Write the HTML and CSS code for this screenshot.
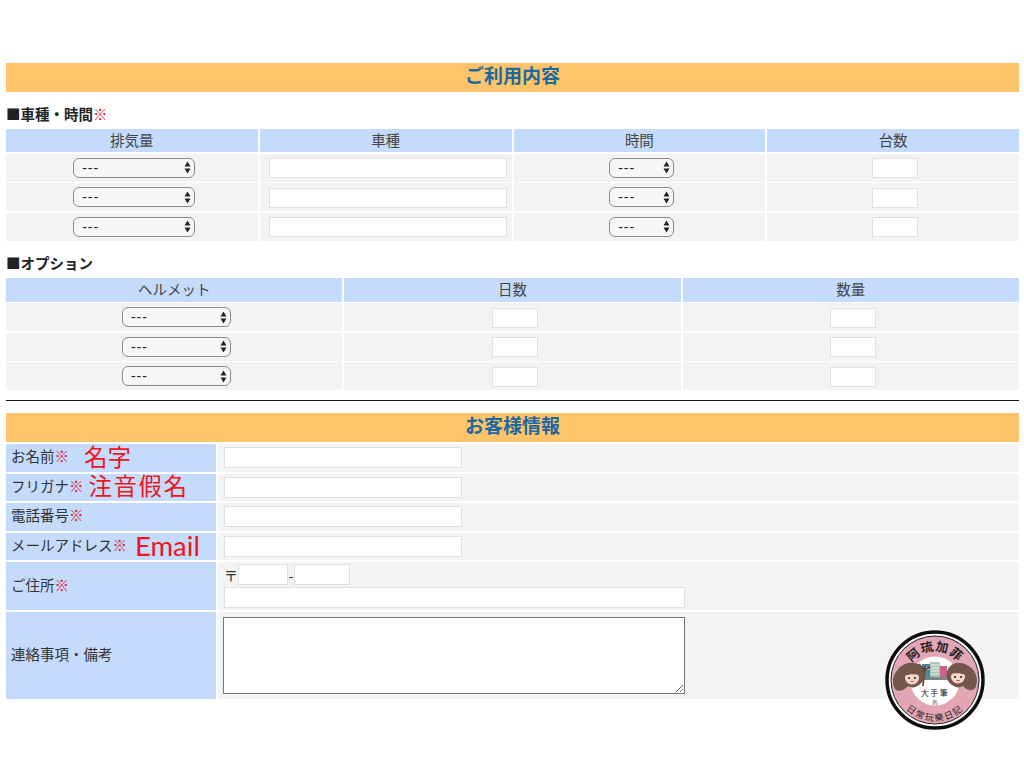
FILE: index.html
```html
<!DOCTYPE html>
<html lang="ja">
<head>
    <meta charset="UTF-8">
    <title>ご利用内容</title>
    <link rel="stylesheet" href="styles.css">
</head>
<body>
    <div class="page">
        <h2 class="bar">ご利用内容</h2>

        <h3 class="sub sub-first">■車種・時間<span class="req">※</span></h3>
        <div class="grid grid-4">
            <div class="th">排気量</div><div class="th">車種</div><div class="th">時間</div><div class="th">台数</div>

            <div class="td"><select class="sel sel-cc"><option>---</option></select></div>
            <div class="td"><input class="inp inp-car" type="text"></div>
            <div class="td"><select class="sel sel-time"><option>---</option></select></div>
            <div class="td"><input class="inp inp-num" type="text"></div>

            <div class="td"><select class="sel sel-cc"><option>---</option></select></div>
            <div class="td"><input class="inp inp-car" type="text"></div>
            <div class="td"><select class="sel sel-time"><option>---</option></select></div>
            <div class="td"><input class="inp inp-num" type="text"></div>

            <div class="td"><select class="sel sel-cc"><option>---</option></select></div>
            <div class="td"><input class="inp inp-car" type="text"></div>
            <div class="td"><select class="sel sel-time"><option>---</option></select></div>
            <div class="td"><input class="inp inp-num" type="text"></div>
        </div>

        <h3 class="sub sub-option">■オプション</h3>
        <div class="grid grid-3">
            <div class="th">ヘルメット</div><div class="th">日数</div><div class="th">数量</div>

            <div class="td"><select class="sel sel-helmet"><option>---</option></select></div>
            <div class="td"><input class="inp inp-num" type="text"></div>
            <div class="td"><input class="inp inp-num" type="text"></div>

            <div class="td"><select class="sel sel-helmet"><option>---</option></select></div>
            <div class="td"><input class="inp inp-num" type="text"></div>
            <div class="td"><input class="inp inp-num" type="text"></div>

            <div class="td"><select class="sel sel-helmet"><option>---</option></select></div>
            <div class="td"><input class="inp inp-num" type="text"></div>
            <div class="td"><input class="inp inp-num" type="text"></div>
        </div>

        <hr class="rule">

        <h2 class="bar">お客様情報</h2>
        <div class="info">
            <div class="lbl h-a">お名前<span class="req">※</span><span class="note note-name">名字</span></div>
            <div class="val h-a"><input class="inp inp-wide" type="text"></div>

            <div class="lbl h-a">フリガナ<span class="req">※</span><span class="note note-kana">注音假名</span></div>
            <div class="val h-a"><input class="inp inp-wide" type="text"></div>

            <div class="lbl h-a">電話番号<span class="req">※</span></div>
            <div class="val h-a"><input class="inp inp-wide" type="text"></div>

            <div class="lbl h-a">メールアドレス<span class="req">※</span><span class="note note-mail">Email</span></div>
            <div class="val h-a"><input class="inp inp-wide" type="text"></div>

            <div class="lbl h-b">ご住所<span class="req">※</span></div>
            <div class="val val-stack h-b">
                <div class="zip">〒<input class="inp inp-zip1" type="text"><span class="dash">-</span><input class="inp inp-zip2" type="text"></div>
                <input class="inp inp-addr" type="text">
            </div>

            <div class="lbl h-c">連絡事項・備考</div>
            <div class="val h-c"><textarea class="memo"></textarea></div>
        </div>
    </div>

    <!-- blog stamp over the corner of the form -->
    <svg class="stamp" width="102" height="102" viewBox="0 0 102 102">
        <circle cx="51" cy="51" r="50.500" fill="#fff"/>
        <circle cx="51" cy="51" r="48" fill="none" stroke="#0c0c0c" stroke-width="3.500"/>
        <circle cx="51" cy="51" r="44" fill="#e3a6b5" stroke="#222" stroke-width="1"/>
        <circle cx="51" cy="52" r="24.500" fill="#fff"/>

        <!-- street between the two heads -->
        <rect x="38" y="35" width="9" height="13" fill="#4a86a8"/>
        <rect x="40" y="38" width="5" height="3" fill="#bcd6e2"/>
        <rect x="46" y="33" width="10" height="16" fill="#a8c6b8"/>
        <path d="M47 36h8M47 39h8M47 42h8M47 45h8" stroke="#eef5f0" stroke-width="1"/>
        <rect x="56" y="37" width="7" height="12" fill="#c9628a"/>
        <rect x="40" y="48" width="24" height="3" fill="#7b858c"/>
        <path d="M41 37l-2 20M35 35l5 6M46 38l-6 3" stroke="#5a3a22" stroke-width="1.600" fill="none"/>

        <!-- left girl -->
        <path d="M10 58c-3-8 1-17 9-22 7-4 16-3 20 4 3 6 1 13-4 16-4 3-8 3-11 1-3 4-12 8-14 1z" fill="#75564a"/>
        <ellipse cx="28" cy="49" rx="7" ry="6.500" fill="#f7d9cc"/>
        <path d="M20 47c3-6 12-7 16-1-5-1-11-1-16 1z" fill="#75564a"/>
        <circle cx="25" cy="49" r="1.100" fill="#222"/><circle cx="31" cy="49" r="1.100" fill="#222"/>
        <path d="M26.500 52.500h3" stroke="#c4413f" stroke-width="1"/>

        <!-- right girl -->
        <path d="M92 57c3-8-1-17-9-21-7-4-15-3-19 4-3 6-1 13 4 16 4 3 8 3 11 1 3 4 11 7 13 0z" fill="#75564a"/>
        <ellipse cx="74" cy="48" rx="7" ry="6.500" fill="#f7d9cc"/>
        <path d="M82 46c-3-6-12-7-16-1 5-1 11-1 16 1z" fill="#75564a"/>
        <circle cx="71" cy="48" r="1.100" fill="#222"/><circle cx="77" cy="48" r="1.100" fill="#222"/>
        <path d="M72.500 51.500h3" stroke="#c4413f" stroke-width="1"/>

        <path id="stampTop" d="M22 51a29 29 0 0 1 58 0" fill="none"/>
        <path id="stampBottom" d="M15.500 71.500a41 41 0 0 0 71 0" fill="none"/>
        <text class="stamp-top"><textPath href="#stampTop" startOffset="50%" text-anchor="middle">阿琉加菲</textPath></text>
        <text class="stamp-bottom"><textPath href="#stampBottom" startOffset="50%" text-anchor="middle">日常玩樂日記</textPath></text>
        <text class="stamp-mid" x="51" y="67" text-anchor="middle">大手筆</text>
        <text class="stamp-small" x="51" y="75" text-anchor="middle">的</text>
    </svg>
</body>
</html>
```

FILE: styles.css
```css
* {
    box-sizing: border-box;
}

html, body {
    margin: 0;
    padding: 0;
    background: #fff;
}

body {
    font-family: "Noto Sans CJK JP", "Liberation Sans", sans-serif;
    color: #333;
    height: 768px;
    overflow: hidden;
    position: relative;
}

.page {
    padding: 63px 5px 0 6px;
}

.bar {
    margin: 0;
    height: 29px;
    line-height: 24px;
    background: #fdc469;
    color: #1c68a0;
    font-size: 19px;
    font-weight: bold;
    text-align: center;
}

.sub {
    margin: 0;
    height: 17px;
    line-height: 13px;
    font-size: 14.500px;
    font-weight: bold;
    color: #222;
}

.sub-first {
    margin-top: 15px;
    margin-bottom: 5px;
}

.sub-option {
    margin-top: 15px;
    margin-bottom: 5px;
}

.req {
    color: #d9202a;
    font-weight: normal;
}

.grid {
    display: grid;
    column-gap: 2px;
    row-gap: 1.500px;
    grid-auto-rows: 28px;
}

.grid-4 {
    grid-template-columns: repeat(4, 1fr);
    grid-template-rows: 23px;
}

.grid-3 {
    grid-template-columns: repeat(3, 1fr);
    grid-template-rows: 24px;
}

.th {
    background: #c4dbfc;
    text-align: center;
    font-size: 14.500px;
    line-height: 22px;
    color: #444;
}

.td {
    background: #f3f3f3;
    display: flex;
    align-items: center;
    justify-content: center;
    padding-left: 4.500px;
}

.td .inp {
    height: 20px;
    margin-top: 1px;
}

.sel {
    appearance: none;
    -webkit-appearance: none;
    height: 20px;
    border: 1px solid #8a8a8a;
    border-radius: 6px;
    padding: 0 0 0 8px;
    font-family: "Liberation Sans", sans-serif;
    font-size: 14px;
    letter-spacing: 1px;
    color: #222;
    background: #f7f7f7 url("data:image/svg+xml,%3Csvg xmlns='http://www.w3.org/2000/svg' width='7' height='13'%3E%3Cpath d='M3.500 0.500L6.500 5.500H0.500zM3.500 12.500L0.500 7.500H6.500z' fill='%23222'/%3E%3C/svg%3E") no-repeat right 3px center;
}

.sel-cc {
    width: 122px;
}

.sel-time {
    width: 65px;
}

.sel-helmet {
    width: 109px;
}

.inp {
    display: block;
    height: 21px;
    border: 1px solid #e0e0e0;
    background: #fff;
    padding: 0;
    margin: 0;
}

.inp-car {
    width: 238px;
}

.inp-num {
    width: 46px;
}

.inp-wide {
    width: 238px;
}

.inp-zip1 {
    width: 50px;
}

.inp-zip2 {
    width: 56px;
}

.inp-addr {
    width: 461px;
}

.rule {
    margin: 10px 0 12px;
    border: 0;
    height: 1px;
    background: #111;
}

.info {
    display: grid;
    grid-template-columns: 210px 1fr;
    gap: 2px;
    margin-top: 2px;
}

.h-a {
    height: 27.500px;
}

.h-b {
    height: 48px;
}

.h-c {
    height: 87px;
}

.lbl {
    background: #c4dbfc;
    display: flex;
    align-items: center;
    padding: 0 0 4px 5px;
    font-size: 14.500px;
    color: #333;
    white-space: nowrap;
}

.val {
    background: #f3f3f3;
    display: flex;
    align-items: center;
    padding-left: 6px;
}

.val-stack {
    flex-direction: column;
    align-items: flex-start;
    justify-content: center;
    gap: 2px;
}

.zip {
    display: flex;
    align-items: center;
    font-size: 14px;
    height: 21px;
}

.dash {
    width: 6px;
    text-align: center;
}

.memo {
    display: block;
    width: 462px;
    height: 77px;
    margin: 0 0 0 -1px;
    border: 1px solid #767676;
    background: #fff;
    padding: 2px;
}

.note {
    color: #f0141c;
    font-family: "Noto Sans CJK TC", sans-serif;
    font-size: 23.500px;
    line-height: 20px;
}

.note-name {
    margin-left: 15px;
}

.note-kana {
    margin-left: 5px;
    letter-spacing: 1.500px;
}

.note-mail {
    margin-left: 8px;
    margin-top: 3px;
    font-family: "Lato", sans-serif;
    font-size: 27.500px;
}

.stamp {
    position: absolute;
    left: 884px;
    top: 629px;
}

.stamp text {
    font-family: "Noto Sans CJK TC", sans-serif;
    fill: #222;
}

.stamp-top {
    font-size: 12.500px;
    font-weight: bold;
    letter-spacing: 1px;
}

.stamp-bottom {
    font-size: 9px;
    letter-spacing: 1.500px;
}

.stamp-mid {
    font-size: 8px;
    letter-spacing: 1.500px;
}

.stamp-small {
    font-size: 5px;
}
```
